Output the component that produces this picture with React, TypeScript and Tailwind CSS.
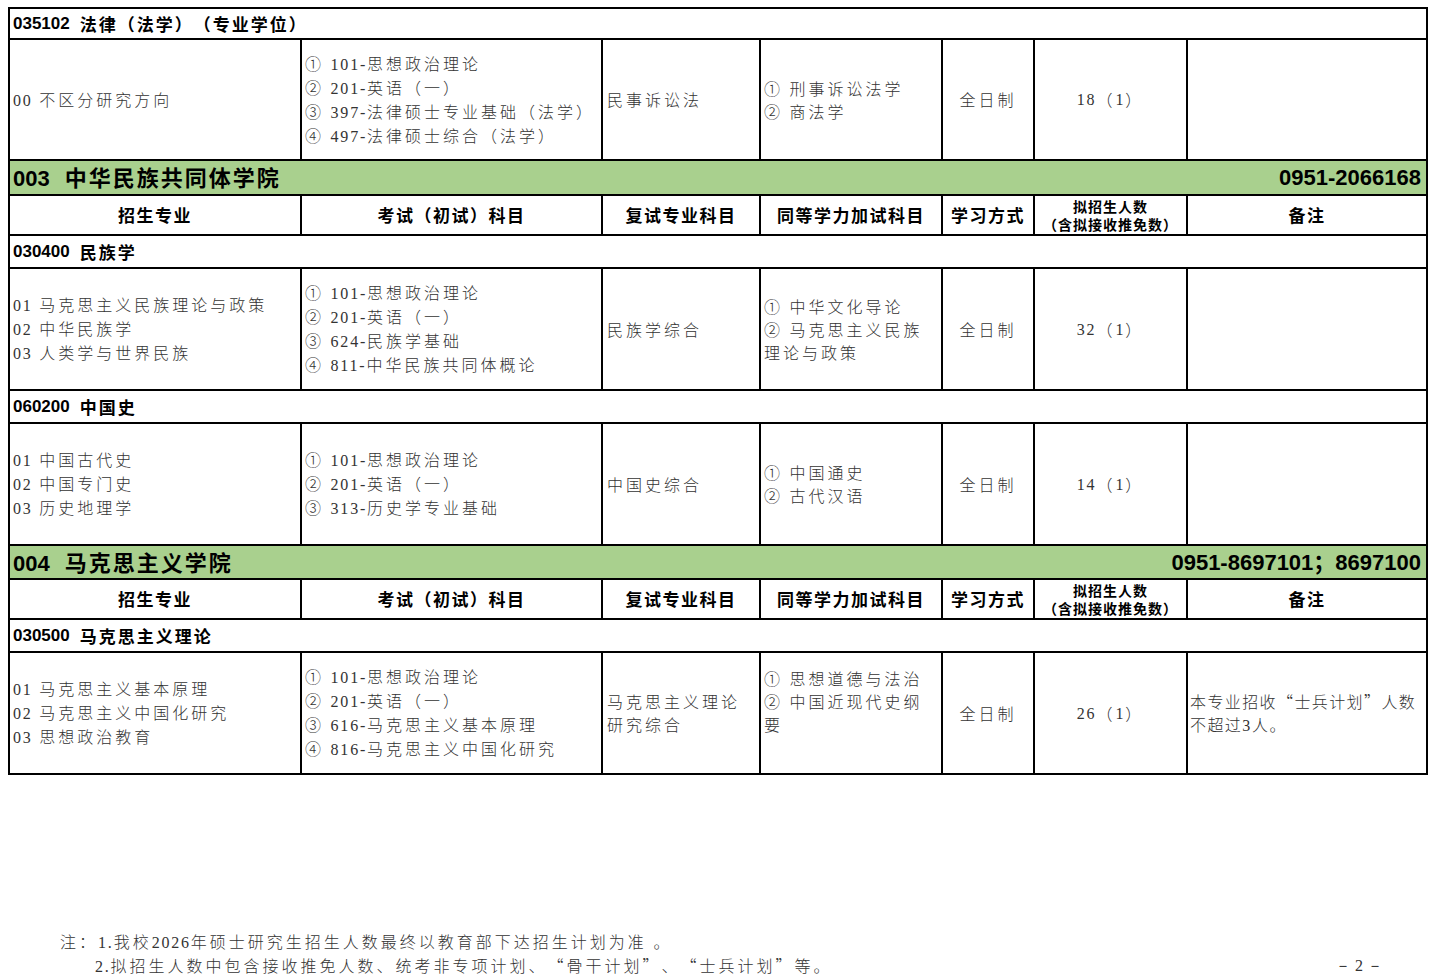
const COLS = "grid grid-cols-[292px_301px_158px_182px_92px_153px_240px]";
const CELL = "border-r-2 border-b-2 border-black flex items-center";
const BODY =
  "font-['Noto_Sans_CJK_SC',sans-serif] font-light text-[16px] tracking-[3px] leading-[23px] text-[#333]";
const HEAD = "font-['Noto_Sans_CJK_SC',sans-serif] font-bold text-black";

interface Program {
  dirs: string[];
  exams: string[];
  retest: string[];
  extra: string[];
  extraUp?: boolean;
  mode: string;
  quota: string;
  note?: string[];
}

interface Major {
  code: string;
  name: string;
  program: Program;
}

interface School {
  code: string;
  name: string;
  phone: string;
  greenH: string;
  majors: Major[];
}

// latin runs (digits, dashes) are set in the serif face, everything else in CJK
function Txt({ s }: { s: string }) {
  const parts = s.split(/([0-9A-Za-z.\-]+)/);
  return (
    <>
      {parts.map((p, i) =>
        i % 2 ? (
          <span key={i} className="font-['Liberation_Serif',serif] font-normal tracking-[1.8px]">
            {p}
          </span>
        ) : (
          p
        )
      )}
    </>
  );
}

function Lines({ items }: { items: string[] }) {
  return (
    <div>
      {items.map((t) => (
        <div key={t} className="whitespace-nowrap">
          <Txt s={t} />
        </div>
      ))}
    </div>
  );
}

function MajorRow({ code, name, h }: { code: string; name: string; h: string }) {
  return (
    <div className={`${CELL} ${h} pl-[3px] font-bold text-[17px] text-black`}>
      <span className="font-['Liberation_Sans',sans-serif]">{code}</span>
      <span className="ml-[10px] font-['Noto_Sans_CJK_SC',sans-serif] tracking-[2px]">{name}</span>
    </div>
  );
}

function DataRow({ p, h }: { p: Program; h: string }) {
  return (
    <div className={`${COLS} ${h} ${BODY}`}>
      <div className={`${CELL} pl-[3px]`}>
        <Lines items={p.dirs} />
      </div>
      <div className={`${CELL} pl-[3px]`}>
        <Lines items={p.exams} />
      </div>
      <div className={`${CELL} pl-1`}>
        <Lines items={p.retest} />
      </div>
      <div className={`${CELL} pl-[3px] ${p.extraUp ? "pb-[23px]" : ""}`}>
        <Lines items={p.extra} />
      </div>
      <div className={`${CELL} justify-center`}>{p.mode}</div>
      <div className={`${CELL} justify-center`}>
        <Txt s={p.quota} />
      </div>
      <div className={`${CELL} pl-[2px] tracking-[1.4px]`}>{p.note && <Lines items={p.note} />}</div>
    </div>
  );
}

function HeaderRow() {
  return (
    <div className={`${COLS} h-[40px] ${HEAD} text-[17px] tracking-[1.5px]`}>
      <div className={`${CELL} justify-center`}>招生专业</div>
      <div className={`${CELL} justify-center`}>考试（初试）科目</div>
      <div className={`${CELL} justify-center`}>复试专业科目</div>
      <div className={`${CELL} justify-center`}>同等学力加试科目</div>
      <div className={`${CELL} justify-center`}>学习方式</div>
      <div className={`${CELL} justify-center text-center`}>
        <div className="text-[14px] leading-[18px] tracking-[1px]">
          <div>拟招生人数</div>
          <div>（含拟接收推免数）</div>
        </div>
      </div>
      <div className={`${CELL} justify-center`}>备注</div>
    </div>
  );
}

function SchoolBar({ s }: { s: School }) {
  return (
    <div
      className={`${CELL} ${s.greenH} justify-between bg-[#a9d08e] pl-[3px] pr-[5px] font-bold text-[22px] text-black`}
    >
      <span>
        <span className="font-['Liberation_Sans',sans-serif]">{s.code}</span>
        <span className="ml-[15px] font-['Noto_Sans_CJK_SC',sans-serif] tracking-[2px]">{s.name}</span>
      </span>
      <span className="font-['Liberation_Sans','Noto_Sans_CJK_SC',sans-serif]">{s.phone}</span>
    </div>
  );
}

const SCHOOLS: School[] = [
  {
    code: "003",
    name: "中华民族共同体学院",
    phone: "0951-2066168",
    greenH: "h-[35px]",
    majors: [
      {
        code: "030400",
        name: "民族学",
        program: {
          dirs: ["01 马克思主义民族理论与政策", "02 中华民族学", "03 人类学与世界民族"],
          exams: ["① 101-思想政治理论", "② 201-英语（一）", "③ 624-民族学基础", "④ 811-中华民族共同体概论"],
          retest: ["民族学综合"],
          extra: ["① 中华文化导论", "② 马克思主义民族", "理论与政策"],
          mode: "全日制",
          quota: "32（1）",
        },
      },
      {
        code: "060200",
        name: "中国史",
        program: {
          dirs: ["01 中国古代史", "02 中国专门史", "03 历史地理学"],
          exams: ["① 101-思想政治理论", "② 201-英语（一）", "③ 313-历史学专业基础"],
          retest: ["中国史综合"],
          extra: ["① 中国通史", "② 古代汉语"],
          mode: "全日制",
          quota: "14（1）",
        },
      },
    ],
  },
  {
    code: "004",
    name: "马克思主义学院",
    phone: "0951-8697101；8697100",
    greenH: "h-[34px]",
    majors: [
      {
        code: "030500",
        name: "马克思主义理论",
        program: {
          dirs: ["01 马克思主义基本原理", "02 马克思主义中国化研究", "03 思想政治教育"],
          exams: ["① 101-思想政治理论", "② 201-英语（一）", "③ 616-马克思主义基本原理", "④ 816-马克思主义中国化研究"],
          retest: ["马克思主义理论", "研究综合"],
          extra: ["① 思想道德与法治", "② 中国近现代史纲", "要"],
          extraUp: true,
          mode: "全日制",
          quota: "26（1）",
          note: ["本专业招收“士兵计划”人数", "不超过3人。"],
        },
      },
    ],
  },
];

const LAW: Program = {
  dirs: ["00 不区分研究方向"],
  exams: ["① 101-思想政治理论", "② 201-英语（一）", "③ 397-法律硕士专业基础（法学）", "④ 497-法律硕士综合（法学）"],
  retest: ["民事诉讼法"],
  extra: ["① 刑事诉讼法学", "② 商法学"],
  mode: "全日制",
  quota: "18（1）",
};

export default function App() {
  return (
    <div className="w-[1437px] h-[980px] bg-white overflow-hidden [text-spacing-trim:space-all] [text-autospace:no-autospace]">
      {/* table */}
      <div className="ml-2 mt-[7px] w-[1420px] border-l-2 border-t-2 border-black">
        <MajorRow code="035102" name="法律（法学）（专业学位）" h="h-[31px]" />
        <DataRow p={LAW} h="h-[121px]" />
        {SCHOOLS.map((s) => (
          <div key={s.code}>
            <SchoolBar s={s} />
            <HeaderRow />
            {s.majors.map((m) => (
              <div key={m.code}>
                <MajorRow code={m.code} name={m.name} h="h-[33px]" />
                <DataRow p={m.program} h="h-[122px]" />
              </div>
            ))}
          </div>
        ))}
      </div>

      {/* footnotes */}
      <div className="mt-[155px] pl-[60px] pr-[54px] font-['Noto_Sans_CJK_SC',sans-serif] font-light text-[16px] tracking-[3px] leading-[23px] text-[#333]">
        <div>
          <Txt s="注：1.我校2026年硕士研究生招生人数最终以教育部下达招生计划为准 。" />
        </div>
        <div className="flex justify-between">
          <span className="pl-[35px]">
            <Txt s="2.拟招生人数中包含接收推免人数、统考非专项计划、“骨干计划”、“士兵计划”等。" />
          </span>
          <span className="font-['Liberation_Serif',serif] font-normal tracking-[0px]">
            －&nbsp;2&nbsp;－
          </span>
        </div>
      </div>
    </div>
  );
}
